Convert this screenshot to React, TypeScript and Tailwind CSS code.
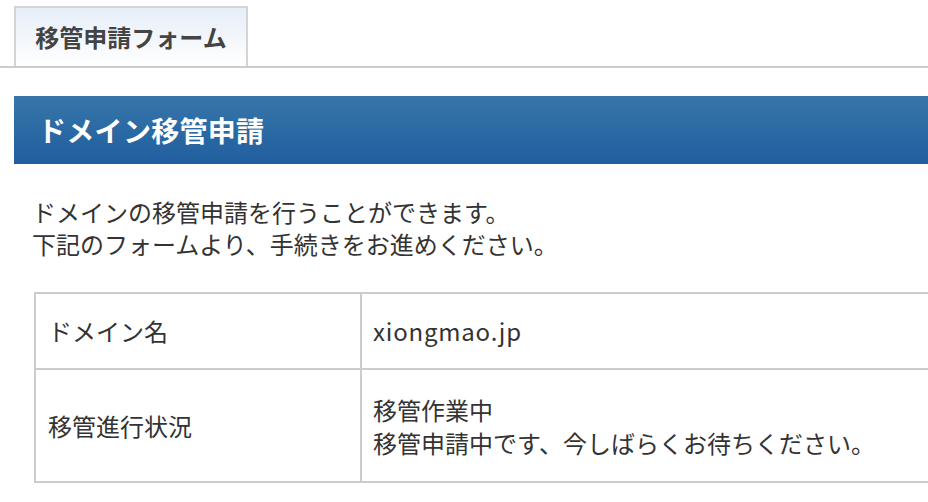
export default function App() {
  return (
    <div
      className="w-[928px] h-[502px] overflow-hidden bg-white text-[#333]"
      style={{ fontFamily: '"Noto Sans CJK JP", "Noto Sans", sans-serif' }}
    >
      {/* Tab bar */}
      <div className="flex pt-[6px] pl-[14px] border-b-2 border-[#cccccc]">
        <div className="flex h-[60px] w-[234px] items-center justify-center border-2 border-b-0 border-[#d4d4d4] bg-gradient-to-b from-[#e6eef8] to-white text-[24px] font-bold text-[#444]">
          移管申請フォーム
        </div>
      </div>

      {/* Section header */}
      <div className="mt-[28px] ml-[14px] flex h-[68px] items-center bg-gradient-to-b from-[#3775a9] to-[#205e9f] pl-[24px] text-[28px] font-bold tracking-[0.3px] text-white">
        ドメイン移管申請
      </div>

      <p className="mt-[32px] ml-[32px] text-[24px] leading-[32px]">
        ドメインの移管申請を行うことができます。
        <br />
        下記のフォームより、手続きをお進めください。
      </p>

      {/* Info table */}
      <div className="mt-[32px] ml-[34px] w-[900px] border-2 border-[#cccccc] text-[24px]">
        <div className="flex h-[76px] border-b-2 border-[#cccccc]">
          <div className="flex w-[326px] items-center border-r-2 border-[#cccccc] pl-[12px]">
            ドメイン名
          </div>
          <div className="flex flex-1 items-center pl-[11px] tracking-[0.8px]">xiongmao.jp</div>
        </div>
        <div className="flex h-[111px]">
          <div className="flex w-[326px] items-center border-r-2 border-[#cccccc] pl-[12px]">
            移管進行状況
          </div>
          <div className="flex flex-1 flex-col justify-center pl-[11px] leading-[33px]">
            <span>移管作業中</span>
            <span>移管申請中です、今しばらくお待ちください。</span>
          </div>
        </div>
      </div>
    </div>
  );
}
